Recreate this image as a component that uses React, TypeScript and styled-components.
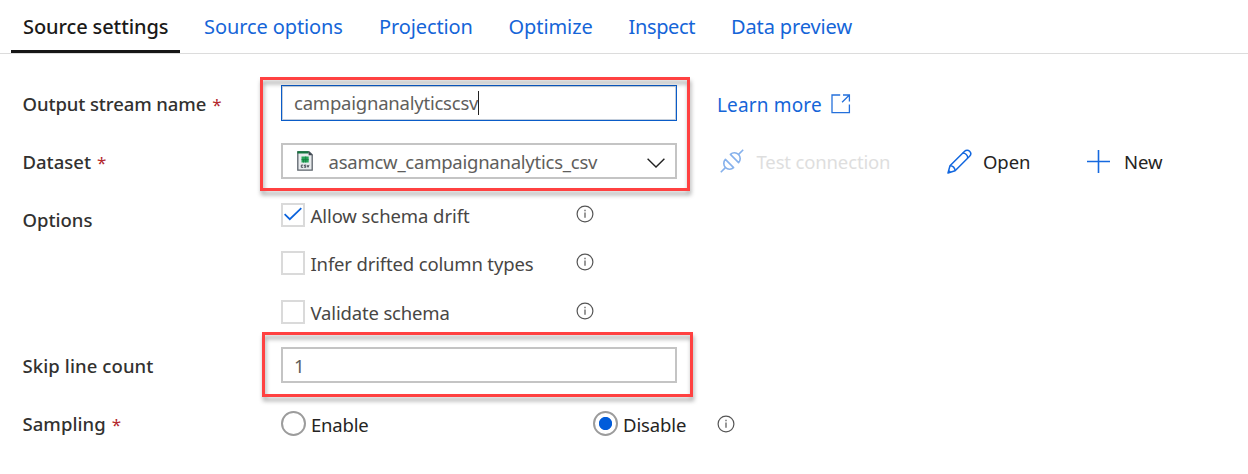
import React from "react";
import styled, { createGlobalStyle } from "styled-components";

const GlobalStyle = createGlobalStyle`
  * { box-sizing: border-box; }
  body {
    margin: 0;
    background: #fff;
    color: #323130;
    font-family: "Segoe UI", "Noto Sans", "Open Sans", sans-serif;
    font-size: 18.5px;
    line-height: 26px;
  }
`;

const Page = styled.main`
  position: relative;
  width: 1248px;
  height: 474px;
  overflow: hidden;
`;

const TabBar = styled.nav`
  display: flex;
  gap: 12px;
  height: 54px;
  padding-left: 11px;
  border-bottom: 1px solid #dcdcdc;
`;

const Tab = styled.div<{ $active?: boolean; $width: number; $track: number }>`
  width: ${(p) => p.$width}px;
  height: 53px;
  padding: 14px 0 0 12px;
  font-size: 20px;
  white-space: nowrap;
  letter-spacing: ${(p) => p.$track}px;
  color: ${(p) => (p.$active ? "#1b1a19" : "#1565d8")};
  font-weight: ${(p) => (p.$active ? 500 : 400)};
  border-bottom: ${(p) => (p.$active ? "3px solid #161616" : "0")};
`;

const Form = styled.div`
  display: flex;
  flex-direction: column;
  padding: 31px 0 0 22.5px;
`;

const Row = styled.div<{ $gap?: number }>`
  display: flex;
  align-items: flex-start;
  height: 36px;
  margin-bottom: ${(p) => p.$gap ?? 22}px;
`;

const Label = styled.div<{ $track: number }>`
  width: 258.5px;
  padding-top: 6px;
  font-weight: 500;
  white-space: nowrap;
  letter-spacing: ${(p) => p.$track}px;
`;

const Required = styled.span`
  margin-left: 6px;
  color: #b3282d;
  font-size: 17px;
  font-weight: 400;
`;

const Field = styled.div<{ $focused?: boolean; $track?: number }>`
  display: flex;
  align-items: center;
  width: 396px;
  height: 36px;
  padding: ${(p) => (p.$focused ? 0 : 1)}px 10px 0 ${(p) => (p.$focused ? 12 : 11)}px;
  background: #fff;
  color: #605e5c;
  white-space: nowrap;
  letter-spacing: ${(p) => p.$track ?? 0}px;
  border: ${(p) => (p.$focused ? "1px solid #0a5cc8" : "2px solid #c4c4c4")};
  box-shadow: ${(p) => (p.$focused ? "inset 0 0 0 1px #c4cedb" : "none")};
`;

const Caret = styled.span`
  width: 1px;
  height: 24px;
  background: #222;
`;

const DatasetIcon = styled.span`
  display: flex;
  margin: -2px 0 0 3px;
`;

const DatasetName = styled.span`
  flex: 1;
  margin-left: 15.5px;
`;

const ArrowSlot = styled.span`
  display: flex;
  padding-top: 3px;
`;

const Action = styled.div<{ $left: number; $gap: number; $color: string; $track: number; $width?: number; $size?: number; $top?: number }>`
  display: flex;
  align-items: center;
  gap: ${(p) => p.$gap}px;
  height: 36px;
  width: ${(p) => (p.$width ? `${p.$width}px` : "auto")};
  margin-left: ${(p) => p.$left}px;
  color: ${(p) => p.$color};
  font-size: ${(p) => p.$size ?? 18.5}px;
  letter-spacing: ${(p) => p.$track}px;
  white-space: nowrap;
  svg { flex: none; }
  span { padding-top: ${(p) => p.$top ?? 2}px; }
  span + svg { margin-top: 2px; }
`;

const OptionList = styled.div`
  display: flex;
  flex-direction: column;
  padding-top: 2px;
`;

const Option = styled.div<{ $track: number; $after: number }>`
  display: flex;
  align-items: center;
  width: 312.5px;
  height: 24px;
  margin-bottom: ${(p) => p.$after}px;
  letter-spacing: ${(p) => p.$track}px;
  color: #484644;
  white-space: nowrap;
  > svg { margin-top: -2px; }
`;

const OptionText = styled.span`
  flex: 1;
  margin-left: 5.5px;
  padding-top: 1px;
`;

const CheckBox = styled.span`
  display: flex;
  width: 24px;
  height: 24px;
  border: 2px solid #dadada;
  background: #fff;
`;

const RadioGroup = styled.div`
  display: flex;
  align-items: center;
  margin-top: 6px;
`;

const RadioOption = styled.div<{ $width: number; $track: number }>`
  display: flex;
  align-items: center;
  gap: 5px;
  width: ${(p) => p.$width}px;
  height: 25px;
  color: #252423;
  white-space: nowrap;
  letter-spacing: ${(p) => p.$track}px;
  span { padding-top: 2px; }
`;

const RadioRing = styled.i<{ $on?: boolean }>`
  width: 25px;
  height: 25px;
  border: 2px solid #9c9c9c;
  border-radius: 50%;
  background: ${(p) => (p.$on ? "radial-gradient(circle, #015cda 6.2px, #fff 7px)" : "#fff")};
`;

const Callout = styled.div<{ $x: number; $y: number; $w: number; $h: number }>`
  position: absolute;
  left: ${(p) => p.$x}px;
  top: ${(p) => p.$y}px;
  width: ${(p) => p.$w}px;
  height: ${(p) => p.$h}px;
  border: 3px solid #ff4141;
  filter: drop-shadow(1px 4px 2px rgba(0, 0, 0, 0.35));
  pointer-events: none;
`;

const Info = () => (
  <svg width="18" height="18" viewBox="0 0 18 18" fill="none" stroke="#555" strokeWidth="1.2">
    <circle cx="9" cy="9" r="7.9" />
    <path d="M9 7.6v5.2M9 4.8v1.4" />
  </svg>
);

const Check = () => (
  <svg width="20" height="20" viewBox="0 0 20 20" fill="none" stroke="#0a62dc" strokeWidth="1.7">
    <path d="M1.6 9.1l5.2 5.1L18.3 3.2" />
  </svg>
);

const CsvFile = () => (
  <svg width="16" height="20" viewBox="0 0 16 20">
    <path d="M.8.8h11.4l3 3v15.4H.8z" fill="#e8ebed" stroke="#5c636b" strokeWidth="1.3" />
    <path d="M.4.2h11.2v2.3H.4z" fill="#14753f" />
    <path d="M11.6.2v4h4z" fill="#3c4650" />
    <path d="M4.5 5.5h7.2v6H4.5z" fill="#27a65a" />
    <path d="M4.5 8.6h7.2M8.7 5.5v6M6.5 8.6v2.9" stroke="#147a41" strokeWidth=".8" />
    <path d="M6.2 14.1H4.3v2.2h1.9M9 14.1H7.4v1h1.4v1.2H7.2M10 13.9l1 2.4 1-2.4" fill="none" stroke="#39414a" strokeWidth=".9" />
  </svg>
);

const Chevron = () => (
  <svg width="18" height="10" viewBox="0 0 18 10" fill="none" stroke="#222" strokeWidth="1.4">
    <path d="M.6.7L9 9 17.4.7" />
  </svg>
);

const OpenExternal = () => (
  <svg width="20" height="20" viewBox="0 0 20 20" fill="none" stroke="#2470db" strokeWidth="1.3">
    <path d="M9.2 1H1v17.6h17.4v-8.2M12 1h6.4v6.6M18.4 1l-7.3 7.3" />
  </svg>
);

const Plug = () => (
  <svg width="24" height="24" viewBox="0 0 24 24" fill="none" stroke="#86b1ec" strokeWidth="1.6" strokeLinejoin="round">
    <path d="M.8 23.2l4.6-4.6M18.600 5.400L23.200.8" />
    <path d="M5.400 10.400l8.200 8.200A5.800 5.800 0 0 1 5.400 10.400z" />
    <path d="M10.400 5.400l8.200 8.200A5.800 5.800 0 0 0 10.400 5.400z" />
  </svg>
);

const Pencil = () => (
  <svg width="25" height="25" viewBox="0 0 25 25" fill="none" stroke="#1267df" strokeWidth="1.5" strokeLinejoin="round">
    <path d="M1 24l2-7.2L17.6 2.2c1.4-1.4 3.6-1.4 5 0s1.4 3.6 0 5L8.1 21.8z" />
    <path d="M3 16.8c2.8-.2 5.1 2 5.1 5M15.7 4.1c2.8.1 5 2.3 5 5M1.2 21.7c1.1.2 1.9.9 2.1 1.8" />
  </svg>
);

const Plus = () => (
  <svg width="23" height="23" viewBox="0 0 23 23" stroke="#1569df" strokeWidth="1.6">
    <path d="M11.5 0v23M0 11.5h23" />
  </svg>
);

const tabs = [
  { name: "Source settings", width: 169, track: -0.1 },
  { name: "Source options", width: 163, track: -0.1 },
  { name: "Projection", width: 117.5, track: -0.12 },
  { name: "Optimize", width: 108, track: -0.08 },
  { name: "Inspect", width: 90.5, track: -0.35 },
  { name: "Data preview", width: 145, track: -0.12 },
];

const options = [
  { name: "Allow schema drift", checked: true, track: -0.08, after: 24 },
  { name: "Infer drifted column types", checked: false, track: -0.16, after: 25 },
  { name: "Validate schema", checked: false, track: -0.16, after: 0 },
];

export default function App() {
  return (
    <Page>
      <GlobalStyle />
      <Callout $x={260} $y={77} $w={430} $h={114} />
      <Callout $x={262} $y={332} $w={431} $h={65} />
      <TabBar>
        {tabs.map((t, i) => (
          <Tab key={t.name} $active={i === 0} $width={t.width} $track={t.track}>{t.name}</Tab>
        ))}
      </TabBar>
      <Form>
        <Row>
          <Label $track={-0.1}>Output stream name<Required>*</Required></Label>
          <Field $focused $track={-0.22}>campaignanalyticscsv<Caret /></Field>
          <Action $left={40} $gap={9} $color="#1565d8" $track={0.15} $size={19} $top={3}><span>Learn more</span><OpenExternal /></Action>
        </Row>
        <Row>
          <Label $track={0}>Dataset<Required>*</Required></Label>
          <Field $track={-0.24}>
            <DatasetIcon><CsvFile /></DatasetIcon>
            <DatasetName>asamcw_campaignanalytics_csv</DatasetName>
            <ArrowSlot><Chevron /></ArrowSlot>
          </Field>
          <Action $left={43} $gap={12.5} $color="#dedede" $track={-0.15} $width={227}><Plug /><span>Test connection</span></Action>
          <Action $left={0} $gap={11} $color="#252423" $track={-0.1} $width={140}><Pencil /><span>Open</span></Action>
          <Action $left={0} $gap={14} $color="#252423" $track={0}><Plus /><span>New</span></Action>
        </Row>
        <Row $gap={110}>
          <Label $track={0}>Options</Label>
          <OptionList>
            {options.map((o) => (
              <Option key={o.name} $track={o.track} $after={o.after}>
                <CheckBox>{o.checked && <Check />}</CheckBox>
                <OptionText>{o.name}</OptionText>
                <Info />
              </Option>
            ))}
          </OptionList>
        </Row>
        <Row>
          <Label $track={0.1}>Skip line count</Label>
          <Field>1</Field>
        </Row>
        <Row>
          <Label $track={0.05}>Sampling<Required>*</Required></Label>
          <RadioGroup>
            <RadioOption $width={312} $track={-0.2}><RadioRing /><span>Enable</span></RadioOption>
            <RadioOption $width={124} $track={-0.12}><RadioRing $on /><span>Disable</span></RadioOption>
            <Info />
          </RadioGroup>
        </Row>
      </Form>
    </Page>
  );
}
